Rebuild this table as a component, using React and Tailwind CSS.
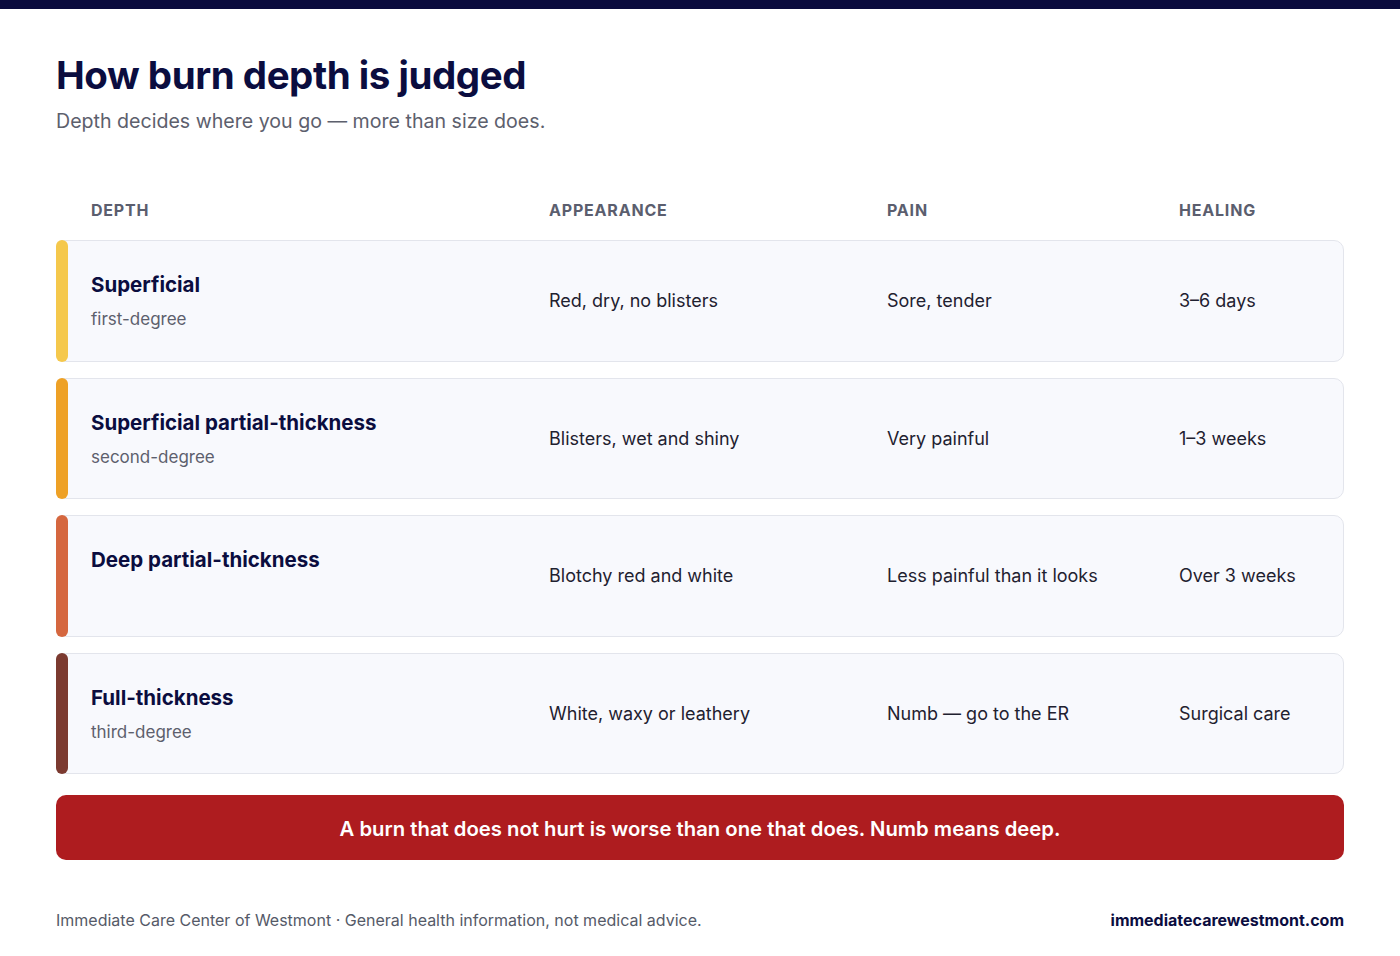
import React from "react";

const rows = [
  {
    name: "Superficial",
    degree: "first-degree",
    look: "Red, dry, no blisters",
    pain: "Sore, tender",
    heal: "3–6 days",
    bar: "bg-[#f5c84c]",
  },
  {
    name: "Superficial partial-thickness",
    degree: "second-degree",
    look: "Blisters, wet and shiny",
    pain: "Very painful",
    heal: "1–3 weeks",
    bar: "bg-[#eea126]",
  },
  {
    name: "Deep partial-thickness",
    degree: "",
    look: "Blotchy red and white",
    pain: "Less painful than it looks",
    heal: "Over 3 weeks",
    bar: "bg-[#d5673f]",
  },
  {
    name: "Full-thickness",
    degree: "third-degree",
    look: "White, waxy or leathery",
    pain: "Numb — go to the ER",
    heal: "Surgical care",
    bar: "bg-[#7b3a30]",
  },
];

const cols = "grid grid-cols-[458px_338px_292px_1fr]";

function BurnRow({ row }) {
  return (
    <div className="flex rounded-[10px] border border-[#e3e5ec] bg-[#f8f9fd] h-[121.5px]">
      <div className={`w-3 -my-px -ml-px rounded-[6px] ${row.bar}`} />
      <div className={`${cols} flex-1 pl-[23px] pr-6 items-center`}>
        <div className="flex flex-col gap-[8px] self-start pt-[30px]">
          <div className="text-[20.5px] leading-[28px] font-bold text-[#0b0d3f]">{row.name}</div>
          <div className="text-[17px] leading-[24px] text-[#5d606d]">{row.degree || "\u00a0"}</div>
        </div>
        <div className="text-[18px] text-[#1f2130]">{row.look}</div>
        <div className="text-[18px] text-[#1f2130]">{row.pain}</div>
        <div className="text-[18px] text-[#1f2130]">{row.heal}</div>
      </div>
    </div>
  );
}

export default function App() {
  return (
    <div className="min-h-[956px] bg-white font-['Inter',sans-serif]">
      <div className="h-[9px] bg-[#0a0b3d]" />
      <div className="px-14">
        <h1 className="mt-[44px] text-[38.5px] leading-[44px] font-bold tracking-[-0.012em] text-[#0b0d3f]">
          How burn depth is judged
        </h1>
        <p className="mt-[10px] text-[19.6px] leading-[28px] text-[#5d606d]">
          Depth decides where you go — more than size does.
        </p>

        <div className={`${cols} mt-[63px] pl-[35px] pr-6 text-[16px] font-bold uppercase tracking-[0.05em] text-[#5b5e6e]`}>
          <div>Depth</div>
          <div>Appearance</div>
          <div>Pain</div>
          <div>Healing</div>
        </div>

        <div className="mt-[18px] flex flex-col gap-[16px]">
          {rows.map((r) => (
            <BurnRow key={r.name} row={r} />
          ))}
        </div>

        <div className="mt-[21px] flex h-[65px] items-center justify-center rounded-[10px] bg-[#ae1c1f] pt-[3px] text-[20.3px] font-semibold text-white">
          A burn that does not hurt is worse than one that does. Numb means deep.
        </div>

        <div className="mt-[48px] flex items-center justify-between text-[16px]">
          <div className="text-[#555a68]">
            Immediate Care Center of Westmont · General health information, not medical advice.
          </div>
          <div className="font-bold text-[#0b0d3f]">immediatecarewestmont.com</div>
        </div>
      </div>
    </div>
  );
}
